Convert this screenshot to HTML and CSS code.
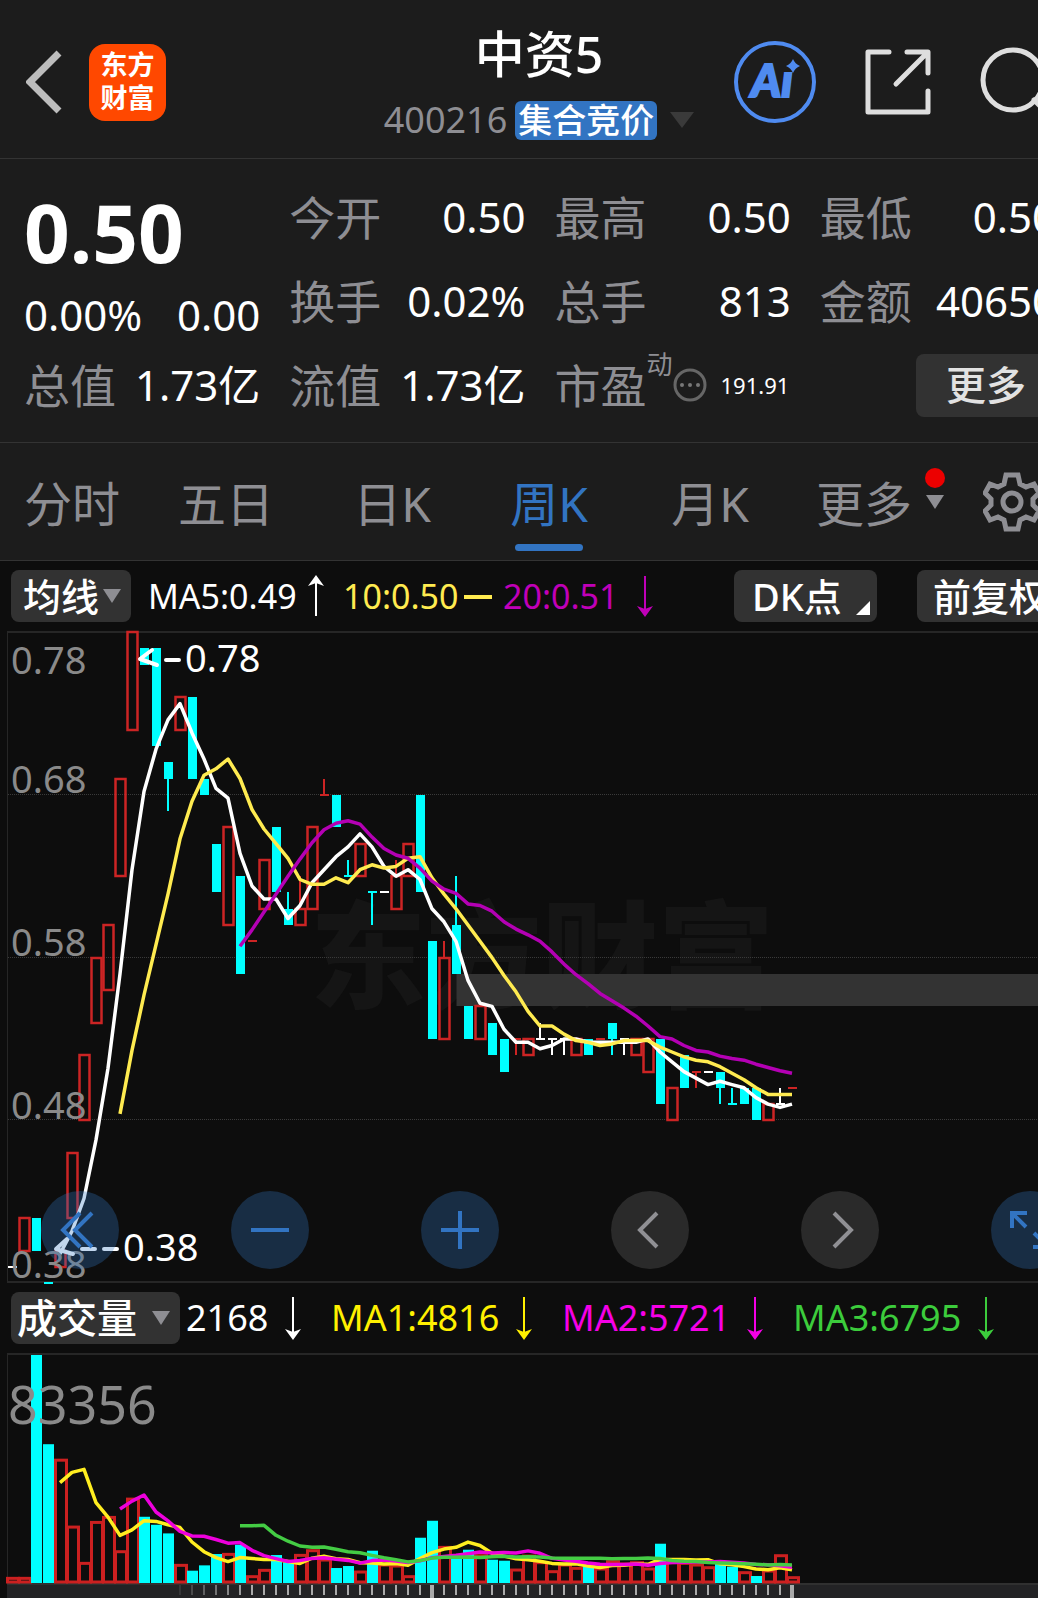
FILE: index.html
```html
<!DOCTYPE html>
<html lang="zh-CN">
<head>
    <meta charset="UTF-8">
    <meta name="viewport" content="width=device-width, initial-scale=1.0">
    <title>中资5 400216 - 周K</title>
    <link rel="stylesheet" href="styles.css">
</head>
<body>
    <div class="app">
        <header class="header">
            <div class="header-left">
                <button class="icon-btn" aria-label="返回">
                    <svg width="38" height="66" viewBox="0 0 38 66"><path d="M33 4 L4 33 L33 62" fill="none" stroke="#bdbdbd" stroke-width="7"/></svg>
                </button>
                <a class="logo" href="#"><span>东方</span><span>财富</span></a>
            </div>
            <div class="header-title">
                <h1>中资5</h1>
                <div class="code-line">
                    <span class="code">400216</span>
                    <span class="tag">集合竞价</span>
                    <svg class="code-arrow" width="24" height="16"><path d="M0 0 H24 L12 16 Z" fill="#3a3a3a"/></svg>
                </div>
            </div>
            <div class="header-right">
                <button class="icon-btn" aria-label="AI">
                    <svg width="82" height="82" viewBox="0 0 82 82">
                        <circle cx="41" cy="41" r="39" fill="none" stroke="#4f8bf0" stroke-width="4"/>
                        <text class="ai-text" x="17" y="56">Aı</text>
                        <path d="M59 18 Q61 23 66 25 Q61 27 59 32 Q57 27 52 25 Q57 23 59 18 Z" fill="#4f8bf0"/>
                    </svg>
                </button>
                <button class="icon-btn" aria-label="分享">
                    <svg width="66" height="66" viewBox="0 0 66 66" fill="none" stroke="#dedede" stroke-width="5" stroke-linecap="round" stroke-linejoin="round">
                        <path d="M24 3 H3 V63 H63 V42"/>
                        <path d="M42 3 H63 V24 M62 4 L31 35"/>
                    </svg>
                </button>
                <button class="icon-btn" aria-label="搜索">
                    <svg width="72" height="72" viewBox="0 0 72 72" fill="none" stroke="#dedede" stroke-width="5" stroke-linecap="round">
                        <circle cx="33" cy="34" r="30"/>
                        <path d="M54 54 L69 69"/>
                    </svg>
                </button>
            </div>
        </header>

        <section class="quote">
            <div class="price">
                <strong>0.50</strong>
                <div class="change"><span>0.00%</span><span>0.00</span></div>
            </div>
            <div class="item"><span class="name">今开</span><span>0.50</span></div>
            <div class="item"><span class="name">最高</span><span>0.50</span></div>
            <div class="item"><span class="name">最低</span><span>0.50</span></div>
            <div class="item"><span class="name">换手</span><span>0.02%</span></div>
            <div class="item"><span class="name">总手</span><span>813</span></div>
            <div class="item"><span class="name">金额</span><span>40650</span></div>
            <div class="item"><span class="name">总值</span><span>1.73亿</span></div>
            <div class="item"><span class="name">流值</span><span>1.73亿</span></div>
            <div class="item item-pe">
                <span class="name">市盈</span><sup>动</sup>
                <svg width="34" height="34" viewBox="0 0 34 34">
                    <circle cx="17" cy="17" r="15" fill="none" stroke="#666" stroke-width="3"/>
                    <g fill="#777"><circle cx="9" cy="17" r="2"/><circle cx="17" cy="17" r="2"/><circle cx="25" cy="17" r="2"/></g>
                </svg>
                <span class="pe">191.91</span>
            </div>
            <div class="item item-more"><button class="more-btn">更多</button></div>
        </section>

        <nav class="tabs">
            <a href="#">分时</a>
            <a href="#">五日</a>
            <a href="#">日K</a>
            <a href="#" class="active">周K</a>
            <a href="#">月K</a>
            <a href="#"><span class="tab-more">更多<i class="dot"></i><i class="tri"></i></span></a>
            <button class="icon-btn settings" aria-label="设置">
                <svg width="58" height="60" viewBox="-29 -30 58 60" fill="none" stroke="#8e8e93" stroke-width="5">
                    <path d="M-6 -27 H6 L8 -18 L14 -15 L22 -18 L27 -9 L21 -3 V3 L27 9 L22 18 L14 15 L8 18 L6 27 H-6 L-8 18 L-14 15 L-22 18 L-27 9 L-21 3 V-3 L-27 -9 L-22 -18 L-14 -15 L-8 -18 Z"/>
                    <circle r="9"/>
                </svg>
            </button>
        </nav>

        <div class="ma-bar">
            <button class="pill">均线<i class="tri"></i></button>
            <span class="ma ma5">MA5:0.49<svg width="18" height="42"><path class="shaft" d="M9 4 V41"/><path class="head" d="M9 0 L17 11 L9 8 L1 11 Z"/></svg></span>
            <span class="ma ma10">10:0.50<svg width="28" height="42"><path class="flat" d="M0 22 H28"/></svg></span>
            <span class="ma ma20">20:0.51<svg width="18" height="42"><path class="shaft" d="M9 1 V38"/><path class="head" d="M9 42 L17 31 L9 34 L1 31 Z"/></svg></span>
            <button class="pill pill-dk">DK点<svg class="corner" width="14" height="14"><path d="M14 0 V14 H0 Z" fill="#fff"/></svg></button>
            <button class="pill pill-right">前复权</button>
        </div>

        <div class="pane price-pane">
            <svg id="priceChart" class="price-chart"></svg>
            <div class="chart-tools">
                <button class="tool blue" aria-label="最左"><svg width="40" height="40"><path d="M20 3 L3 20 L20 37 M32 3 L15 20 L32 37"/></svg></button>
                <button class="tool blue" aria-label="缩小"><svg width="40" height="40"><path d="M1 20 H39"/></svg></button>
                <button class="tool blue" aria-label="放大"><svg width="40" height="40"><path d="M1 20 H39 M20 1 V39"/></svg></button>
                <button class="tool gray" aria-label="左移"><svg width="40" height="40"><path d="M27 3 L10 20 L27 37"/></svg></button>
                <button class="tool gray" aria-label="右移"><svg width="40" height="40"><path d="M14 3 L31 20 L14 37"/></svg></button>
                <button class="tool blue" aria-label="全屏"><svg width="40" height="40"><path d="M2 18 V3 H17 M3 4 L16 17 M38 22 V37 H23 M37 36 L24 23"/></svg></button>
            </div>
        </div>

        <div class="vol-bar">
            <button class="pill">成交量<i class="tri"></i></button>
            <span class="vol vol-now">2168<svg width="18" height="44"><path class="shaft" d="M9 1 V40"/><path class="head" d="M9 44 L17 33 L9 36 L1 33 Z"/></svg></span>
            <span class="vol vol-ma1">MA1:4816<svg width="18" height="44"><path class="shaft" d="M9 1 V40"/><path class="head" d="M9 44 L17 33 L9 36 L1 33 Z"/></svg></span>
            <span class="vol vol-ma2">MA2:5721<svg width="18" height="44"><path class="shaft" d="M9 1 V40"/><path class="head" d="M9 44 L17 33 L9 36 L1 33 Z"/></svg></span>
            <span class="vol vol-ma3">MA3:6795<svg width="18" height="44"><path class="shaft" d="M9 1 V40"/><path class="head" d="M9 44 L17 33 L9 36 L1 33 Z"/></svg></span>
        </div>

        <div class="pane">
            <svg id="volumeChart" class="volume-chart"></svg>
        </div>
        <div class="ruler"><svg id="ruler"></svg></div>
    </div>
    <script src="chart.js"></script>
</body>
</html>
```
FILE: styles.css
```css
* {
    box-sizing: border-box;
}
body {
    margin: 0;
    background-color: #0d0d0d;
    color: #fff;
    font-family: "Noto Sans", "Noto Sans CJK SC", sans-serif;
    line-height: 1;
    overflow-x: hidden;
}
/* the phone layout runs a little past the right edge */
.app {
    width: calc(100% + 42px);
}
button {
    font-family: inherit;
    line-height: 1;
    border: none;
    padding: 0;
    color: #fff;
    cursor: pointer;
}
a {
    color: inherit;
    text-decoration: none;
}
svg {
    display: block;
    flex: none;
}
.icon-btn {
    background: none;
}

/* header */
.header {
    display: grid;
    grid-template-columns: 1fr auto 1fr;
    align-items: center;
    height: 159px;
    padding: 0 28px 0 26px;
    background-color: #1c1c1c;
    border-bottom: 1px solid #333;
}
.header-left,
.header-right {
    display: flex;
    align-items: center;
    height: 100%;
    padding-top: 6px;
}
.header-left {
    gap: 25px;
}
.header-right {
    justify-content: flex-end;
    gap: 49px;
}
.logo {
    display: flex;
    flex-direction: column;
    align-items: center;
    justify-content: center;
    gap: 6px;
    width: 77px;
    height: 77px;
    padding-bottom: 4px;
    border-radius: 16px;
    background-color: #ff4800;
    font-family: "Noto Sans CJK SC", sans-serif;
    font-size: 27px;
    line-height: 27px;
    font-weight: 700;
}
.header-title {
    display: flex;
    flex-direction: column;
    align-items: center;
    gap: 22px;
    padding-top: 10px;
}
h1 {
    margin: 0;
    font-size: 50px;
    font-weight: 500;
}
.code-line {
    display: flex;
    align-items: center;
}
.code {
    color: #8e8e93;
    font-size: 36px;
}
.tag {
    margin-left: 8px;
    padding: 2px 3px 3px;
    border-radius: 6px;
    background-color: #3274c2;
    font-size: 34px;
    font-weight: 500;
}
.code-arrow {
    margin-left: 13px;
}
.ai-text {
    font-family: Lato, sans-serif;
    font-size: 46px;
    font-weight: 900;
    font-style: italic;
    fill: #4f8bf0;
    stroke: #4f8bf0;
    stroke-width: 2;
}

/* quote */
.quote {
    display: grid;
    grid-template-columns: repeat(4, 1fr);
    grid-auto-rows: 84px;
    column-gap: 29px;
    padding: 16px 24px 15px;
    background-color: #1c1c1c;
    border-bottom: 1px solid #333;
    font-size: 42px;
}
.price {
    grid-row: span 2;
}
.price strong {
    display: block;
    font-size: 80px;
    line-height: 114px;
}
.change {
    display: flex;
    justify-content: space-between;
    line-height: 52px;
}
.item {
    display: flex;
    align-items: center;
    justify-content: space-between;
    white-space: nowrap;
}
.name {
    color: #8e8e93;
    font-size: 46px;
}
.item-pe {
    justify-content: flex-start;
}
.item-pe sup {
    align-self: flex-start;
    padding-top: 8px;
    color: #8e8e93;
    font-size: 26px;
}
.item-pe .pe {
    margin-left: 14px;
    font-size: 22px;
}
.item-more {
    justify-content: flex-end;
}
.more-btn {
    width: 140px;
    height: 63px;
    border-radius: 8px;
    background-color: #323232;
    color: #e2e2e2;
    font-size: 40px;
    font-weight: 500;
}

/* period tabs */
.tabs {
    display: grid;
    grid-template-columns: 144fr 164fr 168fr 146fr 176fr 132fr 150fr;
    align-items: center;
    justify-items: center;
    height: 118px;
    background-color: #1c1c1c;
    border-bottom: 1px solid #333;
    color: #8e8e93;
    font-size: 48px;
}
.tabs a {
    position: relative;
    display: flex;
    align-items: center;
    height: 100%;
    padding-top: 4px;
}
.tabs .active {
    color: #3274c2;
}
.tabs .active::after {
    content: "";
    position: absolute;
    left: 5px;
    right: 5px;
    bottom: 9px;
    height: 7px;
    border-radius: 4px;
    background-color: #3274c2;
}
.settings {
    padding-left: 14px;
}
.tri {
    border: 9px solid transparent;
    border-top: 14px solid #8e8e93;
    border-bottom: none;
}
.tab-more {
    position: relative;
}
.tab-more .tri {
    position: absolute;
    right: -32px;
    top: 15px;
}
.dot {
    position: absolute;
    right: -33px;
    top: -12px;
    width: 20px;
    height: 20px;
    border-radius: 50%;
    background-color: #ec0000;
}

/* indicator bars */
.ma-bar,
.vol-bar {
    display: flex;
    align-items: center;
    height: 70px;
    padding-left: 11px;
    white-space: nowrap;
}
.pill {
    display: flex;
    align-items: center;
    justify-content: space-between;
    flex: none;
    width: 120px;
    height: 52px;
    padding: 0 10px 0 12px;
    border-radius: 8px;
    background-color: #323232;
    font-size: 38px;
    font-weight: 500;
}
.pill-dk {
    position: relative;
    width: 143px;
    margin-left: 82px;
    padding-left: 18px;
}
.corner {
    position: absolute;
    right: 7px;
    bottom: 7px;
}
.pill-right {
    width: 150px;
    margin-left: 40px;
    padding: 0 16px;
}
.ma,
.vol {
    display: flex;
    align-items: center;
    flex: none;
}
.ma {
    font-size: 34px;
}
.ma5 {
    width: 195px;
    margin-left: 17px;
    gap: 10px;
}
.ma10 {
    width: 160px;
    gap: 6px;
    color: #ffeb50;
}
.ma20 {
    width: 149px;
    gap: 18px;
    color: #c000b8;
}
.shaft {
    stroke: currentColor;
    stroke-width: 2;
}
.head {
    fill: currentColor;
}
.flat {
    stroke: currentColor;
    stroke-width: 4;
}
.vol-bar .pill {
    width: 169px;
    padding: 0 10px 0 6px;
    font-size: 40px;
}
.vol {
    width: 231px;
    gap: 16px;
    font-size: 36px;
}
.vol-now {
    width: 145px;
    margin-left: 6px;
}
.vol-ma1 {
    color: #fff000;
}
.vol-ma2 {
    color: #f500e6;
}
.vol-ma3 {
    color: #3ccc3c;
}

/* charts */
.pane {
    position: relative;
    margin-left: 7px;
    border-left: 1px solid #262626;
    border-top: 2px solid #262626;
}
.price-pane {
    border-bottom: 2px solid #262626;
}
.pane svg {
    width: 100%;
    overflow: visible;
}
.pane .price-chart {
    height: 648px;
}
.pane .volume-chart {
    height: 228px;
}
.chart-tools {
    position: absolute;
    left: 33px;
    bottom: 12px;
    display: flex;
    gap: 112px;
}
.tool {
    display: flex;
    align-items: center;
    justify-content: center;
    width: 78px;
    height: 78px;
    border-radius: 50%;
}
.pane .tool svg {
    width: 40px;
    fill: none;
    stroke-width: 4;
}
.blue {
    background-color: rgba(49, 118, 196, 0.3);
}
.blue svg {
    stroke: #3274c2;
}
.gray {
    background-color: rgba(120, 120, 120, 0.28);
}
.gray svg {
    stroke: #909094;
}
.watermark {
    font-family: "Noto Sans CJK SC", sans-serif;
    font-size: 116px;
    font-weight: 900;
    fill: #151515;
}
.axis-label {
    font-size: 38px;
    fill: #8a8a8a;
}
.volume-label {
    font-size: 52px;
    fill: #8a8a8a;
}
.mark-label {
    font-size: 38px;
    fill: #fff;
}
.ruler {
    margin-left: 7px;
    height: 15px;
    border-top: 2px solid #303030;
    background-color: #232325;
    overflow: hidden;
}
.ruler svg {
    width: 100%;
    height: 13px;
}
```
FILE: chart.js
```javascript
const RED = '#cc2424';
const CYAN = '#00ffff';
const WHITE = '#ffffff';
const STEP = 12;

// [color, high, body top, body bottom, low], prices in cents
const candles = [
    ['w', 39, 39, 39, 39], ['r', 42, 42, 40, 40], ['c', 42, 42, 40, 40], ['c', 38, 38, 38, 38], ['r', 40, 40, 39, 39],
    ['r', 46, 46, 42, 42], ['r', 52, 52, 48, 48], ['r', 58, 58, 54, 54], ['r', 60, 60, 56, 56], ['r', 69, 69, 63, 63],
    ['r', 78, 78, 72, 72], ['c', 77, 77, 76, 76], ['c', 77, 77, 71, 71], ['c', 70, 70, 69, 67], ['r', 74, 74, 72, 72],
    ['c', 74, 74, 69, 69], ['c', 69, 69, 68, 68], ['c', 65, 65, 62, 62], ['r', 66, 66, 60, 60], ['c', 63, 63, 57, 57],
    ['r', 59, 59, 59, 59], ['r', 64, 64, 61, 61], ['c', 66, 66, 62, 62], ['c', 62, 61, 60, 60], ['r', 63, 61, 60, 60],
    ['r', 66, 66, 61, 61], ['r', 69, 68, 68, 68], ['c', 68, 68, 66, 66], ['c', 64, 63, 63, 63], ['r', 65, 65, 63, 63],
    ['c', 62, 62, 62, 60], ['w', 62, 62, 62, 62], ['r', 64, 63, 61, 61], ['r', 65, 65, 63, 63], ['c', 68, 68, 62, 62],
    ['c', 59, 59, 53, 53], ['r', 59, 58, 53, 53], ['c', 63, 60, 57, 57], ['c', 55, 55, 53, 53], ['r', 55, 55, 53, 53],
    ['c', 54, 54, 52, 52], ['c', 53, 53, 51, 51], ['r', 53, 53, 53, 52], ['r', 53, 53, 52, 52], ['w', 54, 53, 53, 53],
    ['w', 53, 53, 53, 52], ['w', 53, 53, 53, 52], ['r', 53, 53, 52, 52], ['c', 53, 53, 52, 52], ['r', 53, 53, 53, 53],
    ['c', 54, 54, 53, 52], ['w', 53, 53, 53, 52], ['r', 53, 53, 52, 52], ['r', 53, 53, 51, 51], ['c', 53, 53, 49, 49],
    ['r', 50, 50, 48, 48], ['c', 52, 52, 50, 50], ['r', 51, 51, 51, 50], ['w', 51, 51, 51, 51], ['c', 51, 51, 50, 49],
    ['c', 50, 49, 49, 49], ['c', 50, 50, 49, 49], ['c', 50, 50, 48, 48], ['r', 49, 49, 48, 48], ['w', 50, 49, 49, 49],
    ['r', 50, 50, 50, 50]
];

// weekly volumes, the tallest week is VOLUME_MAX
const VOLUME_MAX = 685;
const volumes = [
    17, 17, 685, 417, 372, 171, 62, 185, 200, 97, 255, 199, 175, 149, 56, 37, 53, 87, 89, 115, 22, 41,
    84, 62, 86, 100, 72, 45, 51, 36, 97, 57, 54, 22, 136, 187, 110, 82, 100, 85, 70, 67, 42, 84,
    64, 37, 57, 47, 49, 45, 67, 60, 64, 45, 118, 64, 62, 57, 49, 57, 49, 34, 21, 39, 85, 19
];
const volumeDown = [2, 3, 11, 12, 13, 15, 16, 17, 19, 22, 23, 27, 28, 30, 34, 35, 37, 38, 40, 41, 48, 54, 59, 60, 62];

function add(svg, name, attrs, text) {
    const el = document.createElementNS('http://www.w3.org/2000/svg', name);
    Object.keys(attrs).forEach(key => el.setAttribute(key, attrs[key]));
    if (text) el.textContent = text;
    svg.appendChild(el);
    return el;
}

function centerX(i) {
    return 4.5 + i * STEP;
}

// moving average as a polyline
function addAverage(svg, values, days, y, color) {
    const points = [];
    for (let i = days - 1; i < values.length; i++) {
        let sum = 0;
        for (let j = i - days + 1; j <= i; j++) sum += values[j];
        points.push((centerX(i) - 0.5) + ',' + y(sum / days).toFixed(1));
    }
    add(svg, 'polyline', { points: points.join(' '), fill: 'none', stroke: color, 'stroke-width': 3.5, 'stroke-linejoin': 'round' });
}

function drawPrice() {
    const svg = document.getElementById('priceChart');
    const colors = { r: RED, c: CYAN, w: WHITE };
    const y = p => Math.round((78 - p) * 16.28 - 1);
    const exactY = p => (78 - p) * 16.28 - 1;

    add(svg, 'text', { x: 302, y: 366, class: 'watermark' }, '东方财富');
    [68, 58, 48].forEach(p => {
        add(svg, 'line', { x1: 0, x2: '100%', y1: y(p) - 0.5, y2: y(p) - 0.5, stroke: '#3a3a3a', 'stroke-dasharray': '1 1' });
    });
    add(svg, 'rect', { x: centerX(37), y: y(57), width: '100%', height: y(55) - y(57), fill: '#333' });

    candles.forEach(([type, high, top, bottom, low], i) => {
        const x = centerX(i);
        const color = colors[type];
        if (high > top) add(svg, 'rect', { x: x - 1.5, y: y(high), width: 2, height: y(top) - y(high), fill: color });
        if (low < bottom) add(svg, 'rect', { x: x - 1.5, y: y(bottom), width: 2, height: y(low) - y(bottom), fill: color });
        if (top === bottom) {
            add(svg, 'rect', { x: x - 4.5, y: y(top) - 1, width: 9, height: 2, fill: color });
        } else if (type === 'r') {
            add(svg, 'rect', { x: x - 5, y: y(top), width: 10, height: y(bottom) - y(top), fill: 'none', stroke: color, 'stroke-width': 2.5 });
        } else {
            add(svg, 'rect', { x: x - 4.5, y: y(top), width: 9, height: y(bottom) - y(top), fill: color });
        }
    });

    const closes = candles.map(c => c[0] === 'c' ? c[3] : c[2]);
    addAverage(svg, closes, 5, exactY, '#fff');
    addAverage(svg, closes, 10, exactY, '#ffeb50');
    addAverage(svg, closes, 20, exactY, '#b400b4');

    [['0.78', 41], ['0.68', 160], ['0.58', 323], ['0.48', 486], ['0.38', 645]].forEach(([text, base]) => {
        add(svg, 'text', { x: 3, y: base, class: 'axis-label' }, text);
    });

    // highest and lowest marks
    const stroke = { fill: 'none', stroke: WHITE, 'stroke-width': 4, 'stroke-linecap': 'round', 'stroke-linejoin': 'round' };
    add(svg, 'path', { d: 'M144 17 L132 26 L149 32 M158 27 H171', ...stroke });
    add(svg, 'text', { x: 177, y: 39, class: 'mark-label' }, '0.78');
    add(svg, 'path', { d: 'M59 606 L48 616 L65 621 M74 616 H87 M96 616 H109', ...stroke });
    add(svg, 'text', { x: 115, y: 628, class: 'mark-label' }, '0.38');
}

function drawVolume() {
    const svg = document.getElementById('volumeChart');
    const y = v => 228 - v / VOLUME_MAX * 228;
    volumes.forEach((v, i) => {
        const x = centerX(i);
        if (volumeDown.includes(i)) {
            add(svg, 'rect', { x: x - 5.5, y: y(v), width: 11, height: 228 - y(v), fill: CYAN });
        } else {
            add(svg, 'rect', { x: x - 5, y: y(v) + 1, width: 11, height: 226 - y(v), fill: 'none', stroke: '#cc2020', 'stroke-width': 3 });
        }
    });
    addAverage(svg, volumes, 5, y, '#ffee20');
    addAverage(svg, volumes, 10, y, '#ee00dd');
    addAverage(svg, volumes, 20, y, '#44cc44');
    add(svg, 'text', { x: 0, y: 69, class: 'volume-label' }, '83356');
}

function drawRuler() {
    const svg = document.getElementById('ruler');
    for (let i = 14; i < candles.length; i++) {
        const major = i === 35 || i === 65;
        add(svg, 'rect', {
            x: centerX(i) - (major ? 1.5 : 0.5), y: 0,
            width: major ? 4 : 2, height: major ? 13 : 10,
            fill: '#aaa', opacity: Math.min(1, 0.15 + (i - 14) * 0.15)
        });
    }
}

drawPrice();
drawVolume();
drawRuler();
```
